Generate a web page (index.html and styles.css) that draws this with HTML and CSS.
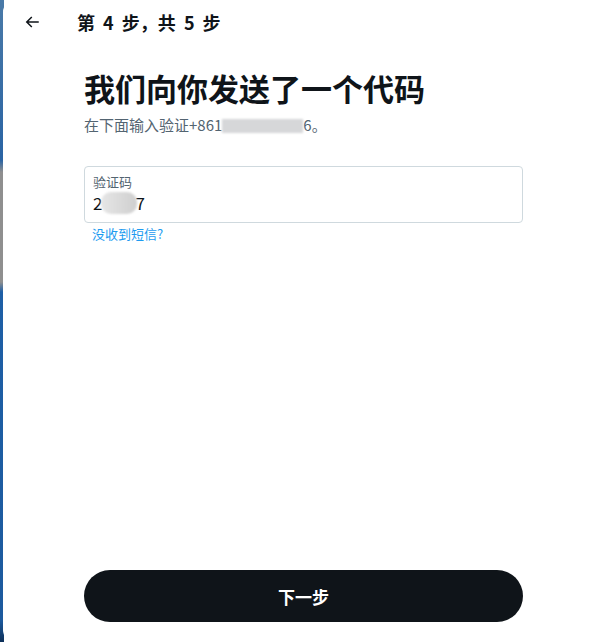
FILE: index.html
```html
<!DOCTYPE html>
<html>
<head>
<meta charset="utf-8">
<title>验证码</title>
<link rel="stylesheet" href="styles.css">
</head>
<body>
<div class="page">
	<div class="backdrop"></div>
	<div class="modal">
		<div class="topbar">
			<svg class="back" viewBox="0 0 24 24" width="18" height="18"><path d="M7.414 13l5.043 5.04-1.414 1.42L3.586 12l7.457-7.46 1.414 1.42L7.414 11H21v2H7.414z"/></svg>
			<span class="step">第 4 步，共 5 步</span>
		</div>
		<div class="content">
			<h1 class="heading">我们向你发送了一个代码</h1>
			<div class="sub">在下面输入验证+861<span class="mask-phone"></span>6。</div>
			<div class="field">
				<div class="label">验证码</div>
				<div class="value">2<span class="mask-code"></span>7</div>
			</div>
			<a class="resend" href="#">没收到短信?</a>
		</div>
		<div class="footer">
			<button class="next">下一步</button>
		</div>
	</div>
</div>
</body>
</html>
```

FILE: styles.css
```css
body { margin: 0; font-family: "Noto Sans CJK SC", "Liberation Sans", sans-serif; color: #0f1419; background: #ffffff; }
.page { display: flex; height: 642px; overflow: hidden; }
.backdrop { width: 4px; flex: none; background: linear-gradient(#4a7aa8 0, #2a64a4 160px, #8f8f8f 172px, #8f8f8f 282px, #1e5fa6 292px, #1c5a9e 620px, #0d2f58 642px); }
.modal { flex: 1; display: flex; flex-direction: column; background: #ffffff; border-radius: 12px 0 0 12px; margin-left: -1px; }
.topbar { height: 44px; display: flex; align-items: center; padding-left: 20px; }
.back { fill: #0f1419; }
.step { margin-left: 36px; font-size: 18px; font-weight: 700; word-spacing: 4px; }
.content { padding: 0 78px 0 81px; }
.heading { margin: 26px 0 0; font-size: 31px; line-height: 36px; font-weight: 700; }
.sub { margin-top: 9px; font-size: 15px; line-height: 20px; color: #536471; }
.mask-phone { display: inline-block; width: 81px; height: 14px; vertical-align: -2px; background: #d6d7d9; filter: blur(1px); }
.field { margin-top: 31px; height: 55px; border: 1px solid #cfd9de; border-radius: 4px; padding: 0 8px; }
.label { margin-top: 6px; font-size: 13px; line-height: 18px; color: #536471; }
.value { font-size: 17px; line-height: 24px; display: flex; align-items: center; }
.mask-code { display: inline-block; width: 36px; height: 22px; margin: 0 -2px 0 -1px; border-radius: 10px; background: linear-gradient(90deg, #e6e6e6, #cfcfcf); filter: blur(1px); }
.resend { display: block; margin-top: 2px; margin-left: 8px; font-size: 13px; line-height: 18px; color: #1d9bf0; text-decoration: none; }
.footer { margin-top: auto; padding: 0 78px 20px 81px; }
.next { display: block; width: 100%; height: 52px; border: none; border-radius: 26px; background: #0f1419; color: #ffffff; font-family: inherit; font-size: 17px; font-weight: 700; }
```
